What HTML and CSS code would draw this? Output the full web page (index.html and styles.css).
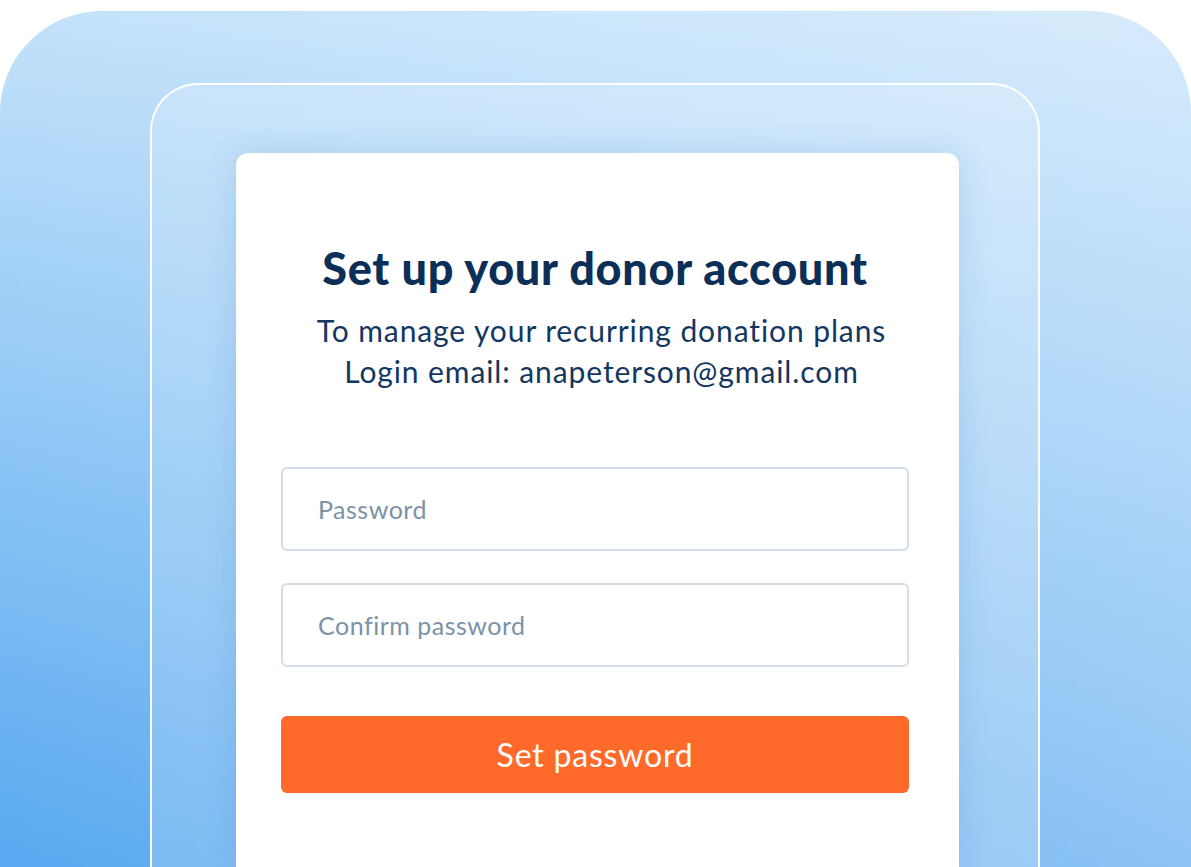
FILE: index.html
```html
<!DOCTYPE html>
<html lang="en">
<head>
<meta charset="utf-8">
<title>Set up your donor account</title>
<link rel="stylesheet" href="styles.css">
</head>
<body>
<div class="outer">
  <div class="frame">
    <div class="card">
      <h1 class="title">Set up your donor account</h1>
      <p class="subtitle">To manage your recurring donation plans<br>Login email: anapeterson@gmail.com</p>
      <form class="form">
        <input class="field" type="password" placeholder="Password">
        <input class="field field-confirm" type="password" placeholder="Confirm password">
        <button class="submit" type="button">Set password</button>
      </form>
    </div>
  </div>
</div>
</body>
</html>
```
FILE: styles.css
```css
html, body {
  margin: 0;
  padding: 0;
  background: #ffffff;
  overflow: hidden;
}

body {
  width: 1191px;
  height: 867px;
  font-family: Lato, "Open Sans", sans-serif;
}

.outer {
  box-sizing: border-box;
  margin-top: 11px;
  height: 856px;
  border-radius: 102px 102px 0 0;
  padding: 72px 151px 0 150px;
  background:
    linear-gradient(90deg, rgba(255,255,255,0) 0%, rgba(255,255,255,0.32) 100%),
    linear-gradient(180deg, #c4e2fa 0%, #93c9f6 45%, #58a8f0 100%);
}

.frame {
  box-sizing: border-box;
  height: 100%;
  border: 2px solid #ffffff;
  border-bottom: none;
  border-radius: 48px 48px 0 0;
  background: rgba(255,255,255,0.18);
  padding: 68px 79px 0 84px;
}

.card {
  box-sizing: border-box;
  height: 100%;
  background: #ffffff;
  border-radius: 12px 12px 0 0;
  box-shadow: 0 0 30px rgba(40, 110, 190, 0.18);
  padding: 89px 50px 0 45px;
  display: flex;
  flex-direction: column;
  align-items: stretch;
}

.title {
  margin: 0;
  text-align: center;
  font-family: Lato, sans-serif;
  font-weight: 900;
  font-size: 45px;
  line-height: 52px;
  letter-spacing: 0.7px;
  color: #0c2f58;
}

.subtitle {
  margin: 16px 0 0;
  padding-left: 13px;
  text-align: center;
  font-family: Lato, sans-serif;
  font-weight: 400;
  font-size: 30px;
  line-height: 41px;
  letter-spacing: 0.9px;
  color: #143761;
}

.form {
  margin-top: 75px;
  display: flex;
  flex-direction: column;
}

.field {
  box-sizing: border-box;
  height: 84px;
  width: 100%;
  margin: 0;
  border: 2px solid #d3dee8;
  border-radius: 6px;
  padding: 0 0 0 35px;
  background: #ffffff;
  font-family: Lato, sans-serif;
  font-size: 25px;
  letter-spacing: 0.5px;
  color: #3a5370;
  outline: none;
}

.field::placeholder {
  color: #7b92a7;
  opacity: 1;
}

.field-confirm {
  margin-top: 32px;
}

.submit {
  margin-top: 49px;
  height: 77px;
  border: none;
  border-radius: 6px;
  background: #ff6a2a;
  color: #ffffff;
  font-family: Lato, sans-serif;
  font-size: 32px;
  font-weight: 400;
  letter-spacing: 0.8px;
  cursor: pointer;
}
```
